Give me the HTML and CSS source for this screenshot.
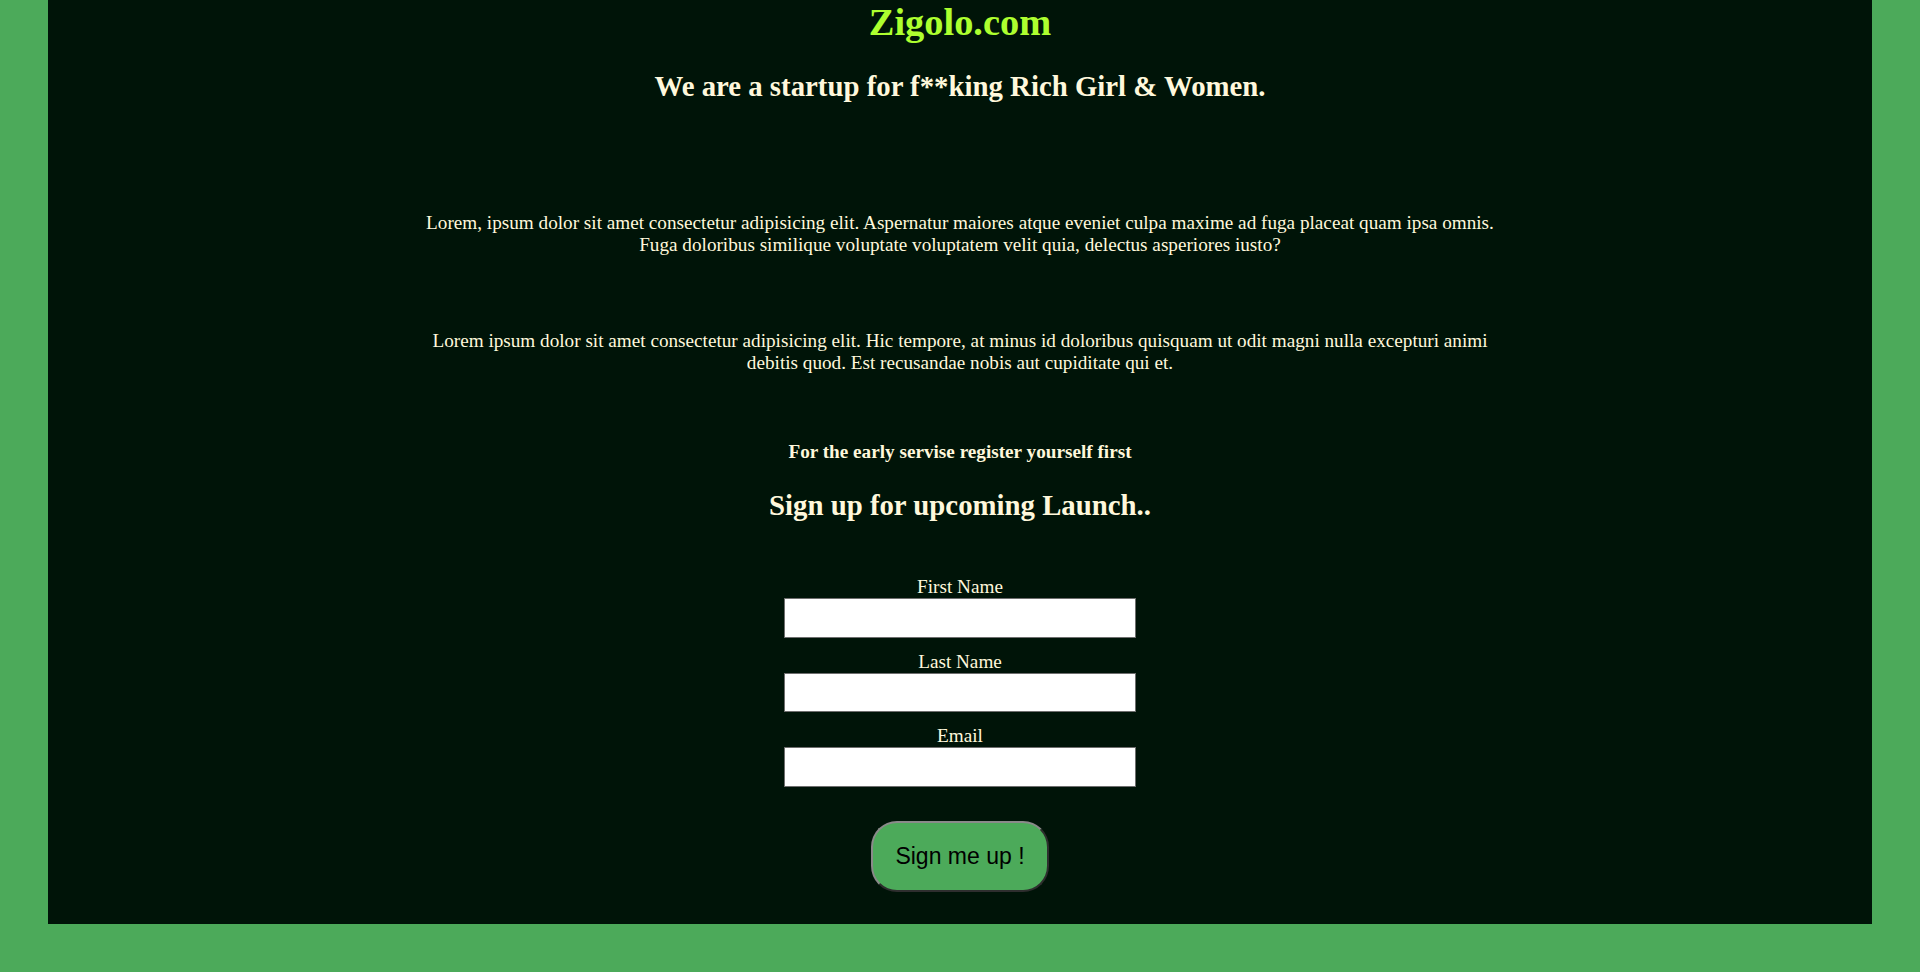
FILE: index.html
```html
<!DOCTYPE html>
<html lang="en">
<head>
<meta charset="utf-8">
<title>Zigolo.com</title>
<link rel="stylesheet" href="styles.css">
</head>
<body>
<main class="panel">
  <h1 class="brand">Zigolo.com</h1>
  <h2 class="tagline">We are a startup for f**king Rich Girl &amp; Women.</h2>
  <p class="intro intro-first">Lorem, ipsum dolor sit amet consectetur adipisicing elit. Aspernatur maiores atque eveniet culpa maxime ad fuga placeat quam ipsa omnis. Fuga doloribus similique voluptate voluptatem velit quia, delectus asperiores iusto?</p>
  <p class="intro intro-second">Lorem ipsum dolor sit amet consectetur adipisicing elit. Hic tempore, at minus id doloribus quisquam ut odit magni nulla excepturi animi debitis quod. Est recusandae nobis aut cupiditate qui et.</p>
  <h4 class="note">For the early servise register yourself first</h4>
  <h2 class="signup-title">Sign up for upcoming Launch..</h2>
  <form class="signup-form">
    <div class="field">
      <label for="fname">First Name</label>
      <input id="fname" type="text">
    </div>
    <div class="field">
      <label for="lname">Last Name</label>
      <input id="lname" type="text">
    </div>
    <div class="field">
      <label for="email">Email</label>
      <input id="email" type="email">
    </div>
    <button class="submit" type="button">Sign me up !</button>
  </form>
</main>
</body>
</html>
```
FILE: styles.css
```css
html, body {
  margin: 0;
  padding: 0;
}

body {
  background: #4caa5a;
  font-family: "Liberation Serif", "Times New Roman", serif;
  color: #fff8dc;
}

.panel {
  width: 95%;
  margin: 0 auto;
  background: #001408;
  text-align: center;
  padding-bottom: 32px;
  display: flex;
  flex-direction: column;
  align-items: center;
}

.brand {
  margin: 0;
  font-size: 38.4px;
  line-height: 44px;
  font-weight: bold;
  color: #adff2f;
}

.tagline {
  margin: 26px 0 0;
  font-size: 28.8px;
  line-height: 33px;
  font-weight: bold;
}

.intro {
  width: 60%;
  margin: 0;
  font-size: 19.2px;
  line-height: 22px;
}

.intro-first {
  margin-top: 109px;
}

.intro-second {
  margin-top: 74px;
}

.note {
  margin: 67px 0 0;
  font-size: 19.2px;
  line-height: 22px;
  font-weight: bold;
}

.signup-title {
  margin: 26px 0 0;
  font-size: 28.8px;
  line-height: 33px;
  font-weight: bold;
}

.signup-form {
  margin-top: 53px;
  display: flex;
  flex-direction: column;
  align-items: center;
  gap: 12px;
}

.field {
  display: flex;
  flex-direction: column;
  align-items: center;
}

.field label {
  font-size: 19.2px;
  line-height: 23px;
}

.field input {
  box-sizing: border-box;
  width: 352px;
  height: 39.5px;
  margin: 0;
  border: 1px solid #6e6e6e;
  background: #ffffff;
  padding: 0 4px;
}

.submit {
  margin-top: 22px;
  box-sizing: border-box;
  width: 178px;
  height: 71px;
  border-radius: 26px;
  border-style: solid;
  border-width: 2px;
  border-color: #8a8a8a #2e2e2e #2e2e2e #8a8a8a;
  background: #4caa5a;
  color: #000;
  font-family: "Liberation Sans", Arial, sans-serif;
  font-size: 23px;
  padding: 0;
}
```
